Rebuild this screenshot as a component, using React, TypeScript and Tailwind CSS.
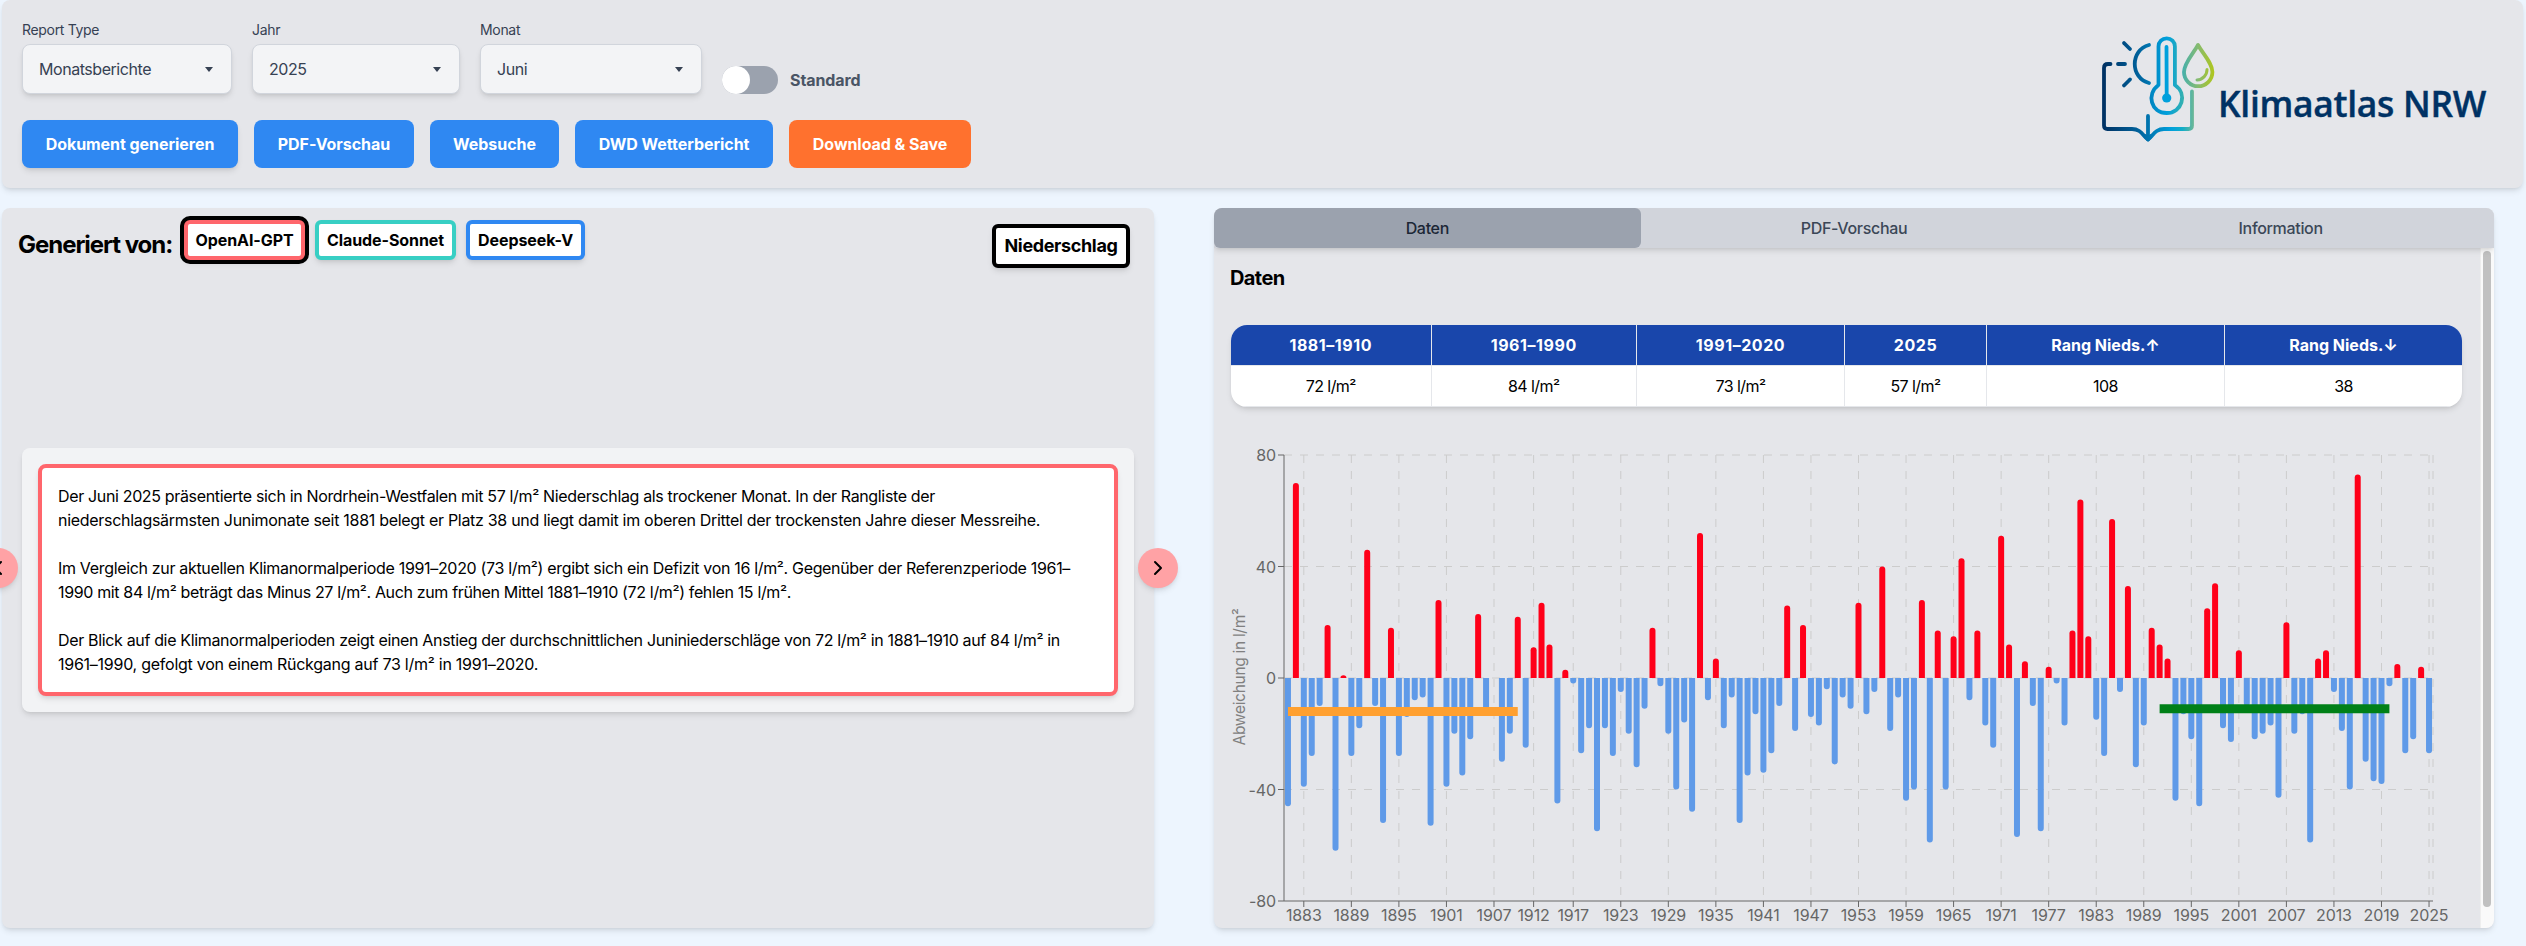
import React from 'react';
import { ChevronLeft, ChevronRight } from 'lucide-react';

const START = 1881;
const VALUES = [
  -46, 70, -39, -28, -10, 19, -62, 1, -28, -18, 46, -10, -52, 18, -28, -14, -8, -7, -53, 28,
  -39, -20, -35, -22, 23, -12, 0, -30, -20, 22, -25, 11, 27, 12, -45, 3, -2, -27, -18, -55,
  -18, -28, -5, -20, -32, -11, 18, -3, -20, -40, -16, -48, 52, -8, 7, -18, -7, -52, -35, -13,
  -34, -27, -10, 26, -19, 19, -14, -17, -4, -31, -7, -11, 27, -13, -5, 40, -19, -7, -44, -40,
  28, -59, 17, -40, 15, 43, -8, 17, -17, -25, 51, 12, -57, 6, -10, -55, 4, -2, -17, 17,
  64, 15, -15, -28, 57, -5, 33, -32, -17, 18, 12, 7, -44, -13, -22, -46, 25, 34, -18, -23,
  10, -10, -22, -20, -17, -43, 20, -20, -13, -59, 7, 10, -5, -19, -40, 73, -30, -37, -38, -3,
  5, -27, -22, 4, -27,
];
const YEAR_TICKS = [
  1883, 1889, 1895, 1901, 1907, 1912, 1917, 1923, 1929, 1935, 1941, 1947, 1953, 1959, 1965, 1971,
  1977, 1983, 1989, 1995, 2001, 2007, 2013, 2019, 2025,
];
const LEFT = 70;
const RIGHT = 1219;
const TOP = 18;
const ZERO = 241;
const BOTTOM = 464;
const BAND = (RIGHT - LEFT) / VALUES.length;
const yearX = (year: number) => LEFT + (year - START + 0.5) * BAND;
const valueY = (value: number) => ZERO - (value * (ZERO - TOP)) / 80;

function barPath(year: number, value: number) {
  const x = yearX(year) - 3;
  const h = Math.abs(valueY(value) - ZERO);
  const r = Math.min(3, h);
  const s = value > 0 ? -1 : 1;
  const sweep = value > 0 ? 1 : 0;
  return `M${x},${ZERO}v${s * (h - r)}a3,${r} 0 0 ${sweep} 3,${s * r}a3,${r} 0 0 ${sweep} 3,${-s * r}v${-s * (h - r)}z`;
}

function Chart() {
  return (
    <svg width="1262" height="491" viewBox="0 0 1262 491" className="block shrink-0">
      <g stroke="#cccccc" strokeDasharray="8 8" fill="none">
        {[80, 40, 0, -40].map((v) => (
          <line key={v} x1={LEFT} x2={RIGHT} y1={valueY(v)} y2={valueY(v)} />
        ))}
        {YEAR_TICKS.map((y) => (
          <line key={y} x1={yearX(y)} x2={yearX(y)} y1={TOP} y2={BOTTOM} />
        ))}
        <line x1={RIGHT} x2={RIGHT} y1={TOP} y2={BOTTOM} />
      </g>
      <g stroke="#666666">
        <line x1={LEFT} x2={RIGHT} y1={BOTTOM} y2={BOTTOM} />
        <line x1={LEFT} x2={LEFT} y1={TOP} y2={BOTTOM} />
        {[80, 40, 0, -40, -80].map((v) => (
          <line key={v} x1={LEFT - 6} x2={LEFT} y1={valueY(v)} y2={valueY(v)} />
        ))}
        {YEAR_TICKS.map((y) => (
          <line key={y} x1={yearX(y)} x2={yearX(y)} y1={BOTTOM} y2={BOTTOM + 6} />
        ))}
      </g>
      {VALUES.map((v, i) =>
        v === 0 ? null : (
          <path key={i} d={barPath(START + i, v)} fill={v > 0 ? '#ff0019' : '#5f9ae8'} />
        ),
      )}
      <line x1={yearX(1881)} x2={yearX(1910)} y1={valueY(-12)} y2={valueY(-12)} stroke="#ffa030" strokeWidth="9" />
      <line x1={yearX(1991)} x2={yearX(2020)} y1={valueY(-11)} y2={valueY(-11)} stroke="#008018" strokeWidth="9" />
      <g fill="#666666" fontSize="16" letterSpacing="-0.1">
        {[80, 40, 0, -40, -80].map((v) => (
          <text key={v} x={LEFT - 8} y={valueY(v) + 6} textAnchor="end">
            {v}
          </text>
        ))}
        {YEAR_TICKS.map((y) => (
          <text key={y} x={yearX(y)} y={BOTTOM + 20} textAnchor="middle">
            {y}
          </text>
        ))}
      </g>
      <text
        transform={`translate(31 ${ZERO - 1}) rotate(-90)`}
        textAnchor="middle"
        fontSize="16"
        fill="#808080"
        textLength="137"
        lengthAdjust="spacingAndGlyphs"
      >
        Abweichung in l/m²
      </text>
    </svg>
  );
}

function Logo() {
  return (
    <svg width="400" height="112" viewBox="0 0 400 112" className="block overflow-visible">
      <defs>
        <linearGradient id="book" gradientUnits="userSpaceOnUse" x1="4" y1="0" x2="116" y2="0">
          <stop offset="0" stopColor="#003264" />
          <stop offset="0.3" stopColor="#00609a" />
          <stop offset="0.6" stopColor="#00a0dc" />
          <stop offset="0.7" stopColor="#12adc8" />
          <stop offset="0.8" stopColor="#6cb797" />
          <stop offset="1" stopColor="#a8c42c" />
        </linearGradient>
        <linearGradient id="drop" gradientUnits="userSpaceOnUse" x1="82" y1="0" x2="114" y2="0">
          <stop offset="0" stopColor="#43afae" />
          <stop offset="0.5" stopColor="#86bb70" />
          <stop offset="1" stopColor="#afc61c" />
        </linearGradient>
        <linearGradient id="thermo" gradientUnits="userSpaceOnUse" x1="50" y1="0" x2="84" y2="0">
          <stop offset="0" stopColor="#0084c0" />
          <stop offset="0.5" stopColor="#00a0dc" />
          <stop offset="1" stopColor="#38b1ae" />
        </linearGradient>
      </defs>
      <g fill="none" strokeWidth="3.8" strokeLinecap="round" strokeLinejoin="round">
        <g stroke="url(#book)">
          <path d="M10.500 32H8Q4 32 4 36V93.500Q4 97 7.500 97H32C41 97 43 104 48 107.500C53 104 55 97 64 97H88.500Q92 97 92 93.500V59.500" />
          <path d="M18 32.001L25 32" />
          <path d="M24 11L30 17" />
          <path d="M24 53.500L30 47.500" />
          <path d="M49 13C30 18 30 46 49 51" />
          <path d="M48 84L48.010 106" />
          <path d="M45 104L48 107.500L51 104" />
        </g>
        <g stroke="url(#thermo)">
          <path d="M58.500 53V14.500a8.200 8.200 0 0 1 16.400 0V53C88 62 82 81 66.700 81C51 81 46 62 58.500 53Z" />
          <path d="M66.500 15L66.700 65" stroke="#00a0dc" />
        </g>
        <g stroke="url(#drop)">
          <path d="M98 13C93 22 84 31 84 40A14.200 14.200 0 0 0 112.400 40C112.400 31 103 22 98 13Z" />
          <path d="M107 37.500C107 43 103 47.500 97 48" strokeWidth="3" />
        </g>
      </g>
      <circle cx="66.700" cy="66" r="4.600" fill="#00a0dc" />
      <text
        x="118"
        y="85"
        fill="#003264"
        stroke="#003264"
        strokeWidth="0.4"
        fontFamily="'Open Sans', sans-serif"
        fontWeight="600"
        fontSize="36"
        textLength="268"
        lengthAdjust="spacingAndGlyphs"
      >
        Klimaatlas NRW
      </text>
    </svg>
  );
}

function Select({ label, value, box }: { label: string; value: string; box: string }) {
  return (
    <div className="flex flex-col gap-1">
      <span className="text-sm leading-5 text-[#364153]">{label}</span>
      <div
        className={`flex h-[50px] items-center justify-between rounded-lg border border-[#d1d5dc] bg-[#f3f4f6] pr-4 pl-4 text-[#364153] shadow-md ${box}`}
      >
        <span className="tracking-[-0.028em]">{value}</span>
        <svg width="8" height="5" viewBox="0 0 8 5" className="mr-0.5">
          <path d="M0 0h8L4 5z" fill="#364153" />
        </svg>
      </div>
    </div>
  );
}

const BUTTONS = [
  { label: 'Dokument generieren', cls: 'w-[216px] bg-[#2f88f2] shadow-md' },
  { label: 'PDF-Vorschau', cls: 'w-[160px] bg-[#2f88f2]' },
  { label: 'Websuche', cls: 'w-[129px] bg-[#2f88f2]' },
  { label: 'DWD Wetterbericht', cls: 'w-[198px] bg-[#2f88f2]' },
  { label: 'Download & Save', cls: 'w-[182px] bg-[#ff712e]' },
];

const MODELS = [
  { label: 'OpenAI-GPT', cls: 'w-[121px] border-[#ff666c] ring-4 ring-black mr-2.5' },
  { label: 'Claude-Sonnet', cls: 'w-[141px] border-[#38cfc4] mr-2.5' },
  { label: 'Deepseek-V', cls: 'w-[119px] border-[#2f88f2]' },
];

const COLUMNS = [
  { head: '1881–1910', value: '72 l/m²' },
  { head: '1961–1990', value: '84 l/m²' },
  { head: '1991–2020', value: '73 l/m²' },
  { head: '2025', value: '57 l/m²' },
  { head: 'Rang Nieds.↑', value: '108' },
  { head: 'Rang Nieds.↓', value: '38' },
];

const REPORT = [
  { text: 'Der Juni 2025 präsentierte sich in Nordrhein-Westfalen mit 57 l/m² Niederschlag als trockener Monat. In der Rangliste der', width: 877 },
  { text: 'niederschlagsärmsten Junimonate seit 1881 belegt er Platz 38 und liegt damit im oberen Drittel der trockensten Jahre dieser Messreihe.', width: 982 },
  { text: '', width: 0 },
  { text: 'Im Vergleich zur aktuellen Klimanormalperiode 1991–2020 (73 l/m²) ergibt sich ein Defizit von 16 l/m². Gegenüber der Referenzperiode 1961–', width: 1012 },
  { text: '1990 mit 84 l/m² beträgt das Minus 27 l/m². Auch zum frühen Mittel 1881–1910 (72 l/m²) fehlen 15 l/m².', width: 733 },
  { text: '', width: 0 },
  { text: 'Der Blick auf die Klimanormalperioden zeigt einen Anstieg der durchschnittlichen Juniniederschläge von 72 l/m² in 1881–1910 auf 84 l/m² in', width: 1002 },
  { text: '1961–1990, gefolgt von einem Rückgang auf 73 l/m² in 1991–2020.', width: 480 },
];

export default function App() {
  return (
    <div className="h-[946px] w-[2526px] overflow-hidden bg-[#edf5fe] px-0.5 font-['Inter','Liberation_Sans',sans-serif] text-base tracking-[-0.02em] text-black">
      <header className="flex h-[188px] w-[2521px] justify-between rounded-lg bg-[#e5e6ea] pt-5 pl-5 shadow-md">
        <div className="flex flex-col">
          <div className="flex items-end">
            <div className="flex gap-5">
              <Select label="Report Type" value="Monatsberichte" box="w-[210px]" />
              <Select label="Jahr" value="2025" box="w-[208px]" />
              <Select label="Monat" value="Juni" box="w-[222px]" />
            </div>
            <div className="ml-5 flex h-7 w-14 rounded-full bg-[#9ba2ae]">
              <div className="size-7 rounded-full bg-white" />
            </div>
            <span className="ml-3 leading-7 font-bold tracking-[-0.005em] text-[#4a5565]">Standard</span>
          </div>
          <div className="mt-[26px] flex gap-4">
            {BUTTONS.map((b) => (
              <button
                key={b.label}
                className={`h-12 rounded-lg font-bold tracking-[-0.003em] whitespace-nowrap text-white ${b.cls}`}
              >
                {b.label}
              </button>
            ))}
          </div>
        </div>
        <div className="mt-3 mr-[23px] h-28 w-[400px]">
          <Logo />
        </div>
      </header>

      <main className="mt-5 flex h-[720px] gap-[60px]">
        <section className="flex w-[1152px] flex-col rounded-lg bg-[#e5e6ea] shadow-md">
          <div className="flex h-20 shrink-0 items-start pt-3 pl-4">
            <h2 className="mt-[9px] w-[166px] text-2xl leading-8 font-bold tracking-[-0.043em] whitespace-nowrap">
              Generiert von:
            </h2>
            {MODELS.map((m) => (
              <button
                key={m.label}
                className={`h-10 rounded-md border-4 bg-white font-bold tracking-[-0.005em] whitespace-nowrap shadow-md ${m.cls}`}
              >
                {m.label}
              </button>
            ))}
            <div className="mt-1 mr-6 ml-auto flex h-11 w-[138px] items-center justify-center rounded-md border-4 border-black bg-white text-lg font-bold tracking-[-0.02em] shadow-md">
              Niederschlag
            </div>
          </div>
          <div className="relative mx-5 mt-40 rounded-lg bg-[#f2f3f5] p-4 shadow-md">
            <div className="rounded-lg border-4 border-[#ff666c] bg-white p-4 shadow-md">
              {REPORT.map((line, i) => (
                <svg key={i} width="1040" height="24" className="block overflow-visible">
                  {line.text && (
                    <text x="0" y="17.500" fontSize="16" textLength={line.width}>
                      {line.text}
                    </text>
                  )}
                </svg>
              ))}
            </div>
            <button className="absolute top-[100px] left-[-44px] flex size-10 items-center justify-center rounded-full bg-[#ffa2a5] shadow-md">
              <ChevronLeft className="size-6" strokeWidth={2} />
            </button>
            <button className="absolute top-[100px] right-[-44px] flex size-10 items-center justify-center rounded-full bg-[#ffa2a5] shadow-md">
              <ChevronRight className="size-6" strokeWidth={2} />
            </button>
          </div>
        </section>

        <section className="flex w-[1280px] flex-col overflow-hidden rounded-lg bg-[#e5e6ea] shadow-md">
          <nav className="z-10 grid h-10 shrink-0 grid-cols-3 bg-[#d1d4db] font-medium text-[#3b4757] shadow-md">
            <div className="flex items-center justify-center rounded-md bg-[#9ba2ae] text-[#1c2736]">Daten</div>
            <div className="flex items-center justify-center">PDF-Vorschau</div>
            <div className="flex items-center justify-center">Information</div>
          </nav>
          <div className="flex h-[680px]">
            <div className="flex w-[1266px] flex-col">
              <h3 className="mt-4 ml-4 text-xl leading-7 font-bold tracking-[-0.03em]">Daten</h3>
              <div className="mt-[33px] ml-[17px] w-[1231px] overflow-hidden rounded-2xl bg-white shadow-md">
                <div className="grid h-10 grid-cols-[200.500px_205.500px_208px_142px_238px_237px] bg-[#1946ab] text-white">
                  {COLUMNS.map((c, i) => (
                    <div
                      key={c.head}
                      className={`flex items-center justify-center font-bold ${i < 4 ? 'tracking-[0.035em]' : 'tracking-normal'} ${i < 5 ? 'border-r border-[#e5e7eb]' : ''}`}
                    >
                      {c.head}
                    </div>
                  ))}
                </div>
                <div className="grid h-[42px] grid-cols-[200.500px_205.500px_208px_142px_238px_237px] border-y border-[#e5e7eb]">
                  {COLUMNS.map((c, i) => (
                    <div
                      key={c.head}
                      className={`flex items-center justify-center tracking-[-0.035em] ${i < 5 ? 'border-r border-[#e5e7eb]' : ''}`}
                    >
                      {c.value}
                    </div>
                  ))}
                </div>
              </div>
              <div className="mt-[30px]">
                <Chart />
              </div>
            </div>
            <div className="w-3.5 border-l border-[#eeeeee] bg-[#fafafa] pt-[3px] pl-0.5">
              <div className="h-[656px] w-2 rounded-full bg-[#c1c1c1]" />
            </div>
          </div>
        </section>
      </main>
    </div>
  );
}
